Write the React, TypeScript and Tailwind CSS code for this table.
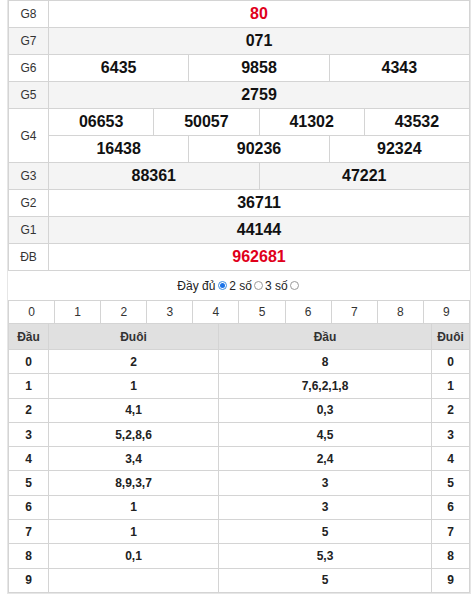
import React from "react";

const font = { fontFamily: '"Liberation Sans", Arial, sans-serif' };

type Row = { label: string; bg: boolean; cols: string[][]; red?: boolean };

const prizes: Row[] = [
  { label: "G8", bg: false, cols: [["80"]], red: true },
  { label: "G7", bg: true, cols: [["071"]] },
  { label: "G6", bg: false, cols: [["6435", "9858", "4343"]] },
  { label: "G5", bg: true, cols: [["2759"]] },
  { label: "G4", bg: false, cols: [["06653", "50057", "41302", "43532"], ["16438", "90236", "92324"]] },
  { label: "G3", bg: true, cols: [["88361", "47221"]] },
  { label: "G2", bg: false, cols: [["36711"]] },
  { label: "G1", bg: true, cols: [["44144"]] },
  { label: "ĐB", bg: false, cols: [["962681"]], red: true },
];

const gridCls: Record<number, string> = {
  1: "grid-cols-1",
  2: "grid-cols-2",
  3: "grid-cols-3",
  4: "grid-cols-4",
};

const loto: [string, string, string, string][] = [
  ["0", "2", "8", "0"],
  ["1", "1", "7,6,2,1,8", "1"],
  ["2", "4,1", "0,3", "2"],
  ["3", "5,2,8,6", "4,5", "3"],
  ["4", "3,4", "2,4", "4"],
  ["5", "8,9,3,7", "3", "5"],
  ["6", "1", "3", "6"],
  ["7", "1", "5", "7"],
  ["8", "0,1", "5,3", "8"],
  ["9", "", "5", "9"],
];

function Radio({ checked }: { checked?: boolean }) {
  return checked ? (
    <span className="inline-flex items-center justify-center w-[9px] h-[9px] rounded-full border border-[#3b8de0] bg-white ml-[3px] mr-[2px]">
      <span className="w-[5px] h-[5px] rounded-full bg-[#1a73e8]" />
    </span>
  ) : (
    <span className="inline-block w-[9px] h-[9px] rounded-full border border-[#9a9a9a] bg-white ml-[2px] mr-[2px]" />
  );
}

export default function App() {
  return (
    <div style={font} className="bg-white w-[471px] h-[595px]">
      <div className="ml-[7px] w-[464px] border-l border-r border-b border-[#e6e6e6]">
        {/* Prize table */}
        <div className="border-l border-t border-[#d4d4d4]">
          {prizes.map((r) => (
            <div key={r.label} className={`flex border-b border-[#d4d4d4] ${r.bg ? "bg-[#f4f4f4]" : "bg-white"}`}>
              <div className="w-[40px] shrink-0 border-r border-[#d4d4d4] flex items-center justify-center text-[12px] text-[#333]">
                {r.label}
              </div>
              <div className="flex-1 flex flex-col">
                {r.cols.map((sub, i) => (
                  <div
                    key={i}
                    className={`grid ${gridCls[sub.length]} h-[26px] ${i < r.cols.length - 1 ? "border-b border-[#d4d4d4] h-[27px]" : ""}`}
                  >
                    {sub.map((n, j) => (
                      <div
                        key={j}
                        className={`border-r border-[#d4d4d4] flex items-center justify-center text-[16px] font-bold ${r.red ? "text-[#e0001b]" : "text-[#111]"}`}
                      >
                        {n}
                      </div>
                    ))}
                  </div>
                ))}
              </div>
            </div>
          ))}
        </div>

        {/* Radio line */}
        <div className="h-[29px] flex items-center justify-center text-[12px] text-[#222]">
          <span>Đầy đủ</span>
          <Radio checked />
          <span>2 số</span>
          <Radio />
          <span>3 số</span>
          <Radio />
        </div>

        {/* Loto table */}
        <div className="border-l border-t border-[#d4d4d4]">
          <div className="grid grid-cols-10 h-[23px] border-b border-[#d4d4d4]">
            {Array.from({ length: 10 }, (_, i) => (
              <div key={i} className="border-r border-[#d4d4d4] flex items-center justify-center text-[12px] text-[#333]">
                {i}
              </div>
            ))}
          </div>
          <div className="flex h-[26px] border-b border-[#d4d4d4] bg-[#e0e0e0] text-[12px] font-bold text-[#333]">
            <div className="w-[40px] border-r border-[#d4d4d4] flex items-center justify-center">Đầu</div>
            <div className="w-[170px] border-r border-[#d4d4d4] flex items-center justify-center">Đuôi</div>
            <div className="w-[213px] border-r border-[#d4d4d4] flex items-center justify-center">Đầu</div>
            <div className="flex-1 border-r border-[#d4d4d4] flex items-center justify-center">Đuôi</div>
          </div>
          {loto.map((r) => (
            <div key={r[0]} className="flex h-[24.3px] border-b border-[#d4d4d4] bg-white text-[12px] font-bold text-[#222]">
              <div className="w-[40px] border-r border-[#d4d4d4] flex items-center justify-center">{r[0]}</div>
              <div className="w-[170px] border-r border-[#d4d4d4] flex items-center justify-center">{r[1]}</div>
              <div className="w-[213px] border-r border-[#d4d4d4] flex items-center justify-center">{r[2]}</div>
              <div className="flex-1 border-r border-[#d4d4d4] flex items-center justify-center">{r[3]}</div>
            </div>
          ))}
        </div>
      </div>
    </div>
  );
}
